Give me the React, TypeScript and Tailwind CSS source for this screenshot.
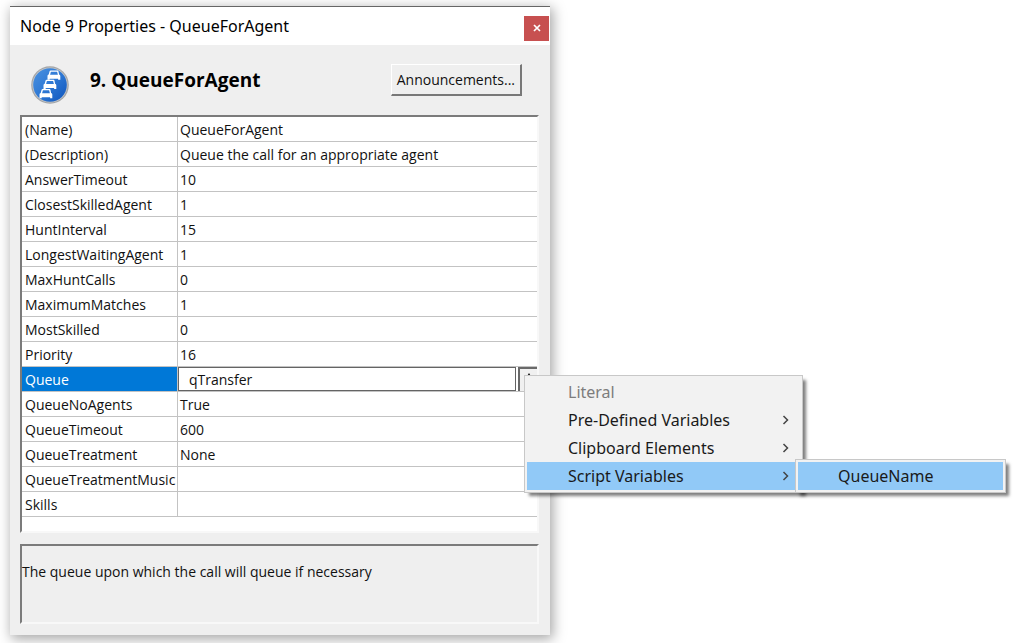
import React from "react";

type Property = { name: string; value: string };

const properties: Property[] = [
  { name: "(Name)", value: "QueueForAgent" },
  { name: "(Description)", value: "Queue the call for an appropriate agent" },
  { name: "AnswerTimeout", value: "10" },
  { name: "ClosestSkilledAgent", value: "1" },
  { name: "HuntInterval", value: "15" },
  { name: "LongestWaitingAgent", value: "1" },
  { name: "MaxHuntCalls", value: "0" },
  { name: "MaximumMatches", value: "1" },
  { name: "MostSkilled", value: "0" },
  { name: "Priority", value: "16" },
  { name: "Queue", value: "qTransfer" },
  { name: "QueueNoAgents", value: "True" },
  { name: "QueueTimeout", value: "600" },
  { name: "QueueTreatment", value: "None" },
  { name: "QueueTreatmentMusic", value: "" },
  { name: "Skills", value: "" },
];

function Car({ x, y }: { x: number; y: number }) {
  return (
    <g transform={`translate(${x} ${y})`}>
      <path
        fill="#fff"
        fillRule="evenodd"
        d="M3.200 0h6.600c.7 0 1 .4 1.200 1l.6 3c.7.200 1.200.7 1.200 1.500V9.300h-2.200V8.300H2.200v1H0V5.500C0 4.700.5 4.200 1.200 4L2 1C2.200.4 2.500 0 3.200 0zM3.400 1.200 2.600 4.200h7.800L9.600 1.200z"
      />
    </g>
  );
}

function QueueIcon() {
  return (
    <svg viewBox="0 0 38 38" className="mt-[2px] size-[38px] shrink-0" aria-hidden="true">
      <defs>
        <linearGradient id="disc" x1="0" y1="0" x2="1" y2="1">
          <stop offset="0" stopColor="#4b92e0" />
          <stop offset="0.5" stopColor="#2e78d4" />
          <stop offset="1" stopColor="#0f55bd" />
        </linearGradient>
      </defs>
      <circle cx="19" cy="19" r="18.800" fill="#a3a5a8" />
      <circle cx="19" cy="19" r="17.600" fill="#c4c6c8" />
      <circle cx="19" cy="19" r="16.800" fill="url(#disc)" />
      <Car x={16.5} y={4.5} />
      <Car x={12.5} y={13.8} />
      <Car x={8.5} y={23} />
    </svg>
  );
}

function Chevron() {
  return (
    <svg viewBox="0 0 8 10" className="h-[10px] w-2" fill="none" stroke="#444" strokeWidth="1.500" aria-hidden="true">
      <path d="M1.500 1l4 4-4 4" />
    </svg>
  );
}

function MenuItem({ label, disabled, active }: { label: string; disabled?: boolean; active?: boolean }) {
  return (
    <button
      type="button"
      role="menuitem"
      disabled={disabled}
      className={`flex h-7 w-full items-center justify-between pr-[10px] pl-[41px] text-left font-['Noto_Sans',sans-serif] text-base ${
        active ? "bg-[#91c9f7]" : ""
      } ${disabled ? "text-[#7d7d7d]" : "text-[#1a1a1a]"}`}
    >
      {label}
      {!disabled && <Chevron />}
    </button>
  );
}

function VariableMenu() {
  return (
    <div
      role="menu"
      className="absolute top-2 left-[6px] z-10 w-[279px] border border-[#c8c8c8] bg-[#f2f2f2] p-[2px] shadow-[4px_4px_3px_-1px_rgba(0,0,0,0.5)]"
    >
      <MenuItem label="Literal" disabled />
      <MenuItem label="Pre-Defined Variables" />
      <MenuItem label="Clipboard Elements" />
      <div className="relative">
        <MenuItem label="Script Variables" active />
        <div
          role="menu"
          className="absolute -top-[3px] left-[268px] w-[211px] border border-[#c8c8c8] bg-[#f2f2f2] p-[2px] shadow-[4px_4px_3px_-1px_rgba(0,0,0,0.5)]"
        >
          <button
            type="button"
            role="menuitem"
            className="flex h-7 w-full items-center bg-[#91c9f7] pl-10 font-['Noto_Sans',sans-serif] text-base text-[#1a1a1a]"
          >
            QueueName
          </button>
        </div>
      </div>
    </div>
  );
}

function PropertyRow({ name, value }: Property) {
  const selected = name === "Queue";
  return (
    <tr className="h-[25px]">
      <th
        scope="row"
        className={`border-r border-b border-[#c3c3c3] px-0 pt-[2px] pb-0 pl-[3px] text-left font-normal whitespace-nowrap ${
          selected ? "bg-[#0078d7] text-white" : ""
        }`}
      >
        {selected ? <label htmlFor="queue-value">{name}</label> : name}
      </th>
      <td className={`border-b border-[#c3c3c3] ${selected ? "p-0" : "pt-[2px] pr-0 pb-0 pl-[2px]"}`}>
        {selected ? (
          <div className="flex h-6 gap-[2px]">
            <input
              id="queue-value"
              defaultValue={value}
              className="h-6 min-w-0 flex-1 border border-[#646464] bg-white pl-[10px] outline-none"
            />
            <div className="relative w-[19px]">
              <button
                type="button"
                aria-label="Choose a variable"
                className="flex h-6 w-full justify-center border-t-2 border-l-2 border-[#696969] bg-[#f0f0f0]"
              >
                <svg viewBox="0 0 8 6" className="mt-1 h-[6px] w-2" aria-hidden="true">
                  <path d="M4 0l3 5H1z" fill="#111" />
                </svg>
              </button>
              <VariableMenu />
            </div>
          </div>
        ) : (
          value
        )}
      </td>
    </tr>
  );
}

export default function App() {
  return (
    <div className="min-h-screen overflow-hidden bg-white px-[10px] pt-[6px] pb-2 font-['Open_Sans','Noto_Sans',sans-serif] text-[14px] leading-5 text-[#111]">
      <main className="w-full max-w-[540px] border-t border-[#666] bg-[#efefef] pb-[11px] shadow-[2px_3px_12px_1px_rgba(0,0,0,0.35)]">
        <header className="flex h-[38px] items-center justify-between bg-white pr-px pl-[10px]">
          <h1 className="font-['Noto_Sans',sans-serif] text-base text-black">Node 9 Properties - QueueForAgent</h1>
          <button type="button" aria-label="Close" className="mt-1 flex size-[25px] items-center justify-center bg-[#c75050]">
            <svg viewBox="0 0 8 8" className="size-2" stroke="#fff" strokeWidth="1.700" aria-hidden="true">
              <path d="M1 1l6 6M7 1L1 7" />
            </svg>
          </button>
        </header>

        <section className="flex h-[70px] items-center pt-2 pr-[28px] pl-[21px]">
          <QueueIcon />
          <h2 className="mb-2 ml-[21px] flex-1 text-[19px] font-bold text-black">9. QueueForAgent</h2>
          <button
            type="button"
            className="mb-2 h-8 border-t border-r-2 border-b-2 border-l border-t-white border-r-[#787878] border-b-[#787878] border-l-white px-[5px] whitespace-nowrap"
          >
            Announcements...
          </button>
        </section>

        <section className="mr-[11px] ml-[10px] border-2 border-t-[#7b7b7b] border-r-[#f8f8f8] border-b-[#f8f8f8] border-l-[#7b7b7b] bg-white pb-[14px]">
          <table className="w-full table-fixed border-separate border-spacing-0">
            <colgroup>
              <col className="w-[156px]" />
              <col />
            </colgroup>
            <tbody>
              {properties.map((property) => (
                <PropertyRow key={property.name} {...property} />
              ))}
            </tbody>
          </table>
        </section>

        <section className="mt-[11px] mr-[11px] ml-[10px] h-[80px] border-2 border-t-[#7b7b7b] border-r-[#f8f8f8] border-b-[#f8f8f8] border-l-[#7b7b7b] pt-4">
          <p>The queue upon which the call will queue if necessary</p>
        </section>
      </main>
    </div>
  );
}
